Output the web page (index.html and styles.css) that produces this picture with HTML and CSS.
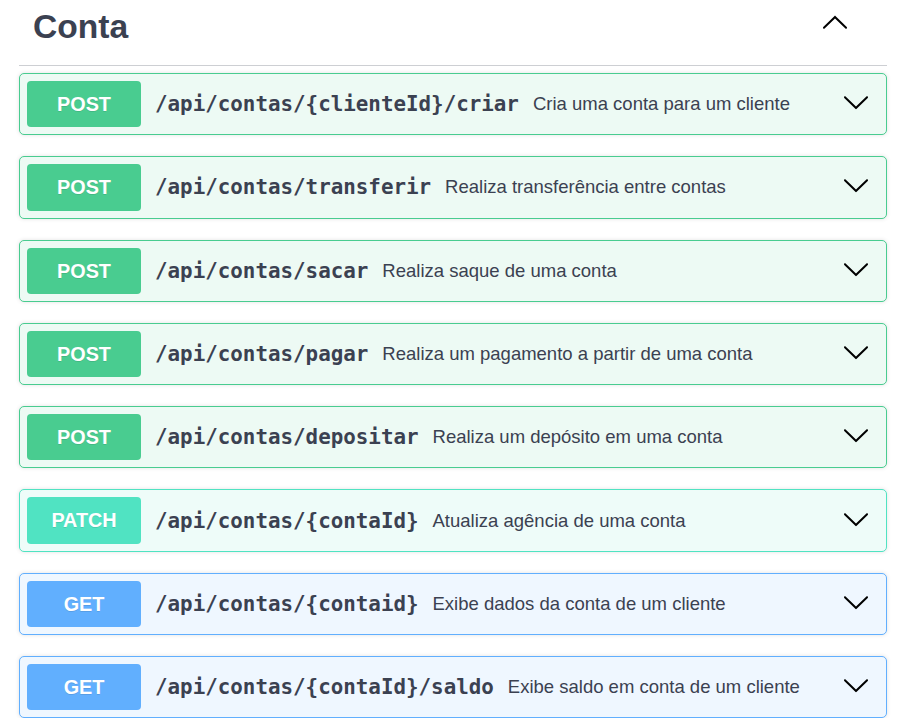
FILE: index.html
```html
<!DOCTYPE html>
<html lang="pt">
<head>
<meta charset="utf-8">
<title>Conta</title>
<link rel="stylesheet" href="styles.css">
</head>
<body>
<div class="tag-section">
  <div class="tag-header">
    <h3 class="tag-title">Conta</h3>
    <svg class="arrow arrow-up" viewBox="0 0 20 20" width="28" height="28"><path transform="rotate(180 10 10)" d="M17.418 6.109c.272-.268.709-.268.979 0s.271.701 0 .969l-7.908 7.83c-.27.268-.707.268-.979 0l-7.908-7.83c-.27-.268-.27-.701 0-.969.271-.268.709-.268.979 0L10 13.25l7.418-7.141z"/></svg>
  </div>
  <div class="ops">
    <div class="op op-post">
      <span class="method">POST</span>
      <span class="path">/api/contas/{clienteId}/criar</span>
      <span class="desc">Cria uma conta para um cliente</span>
      <svg class="arrow" viewBox="0 0 20 20" width="28" height="28"><path d="M17.418 6.109c.272-.268.709-.268.979 0s.271.701 0 .969l-7.908 7.83c-.27.268-.707.268-.979 0l-7.908-7.83c-.27-.268-.27-.701 0-.969.271-.268.709-.268.979 0L10 13.25l7.418-7.141z"/></svg>
    </div>
    <div class="op op-post">
      <span class="method">POST</span>
      <span class="path">/api/contas/transferir</span>
      <span class="desc">Realiza transferência entre contas</span>
      <svg class="arrow" viewBox="0 0 20 20" width="28" height="28"><path d="M17.418 6.109c.272-.268.709-.268.979 0s.271.701 0 .969l-7.908 7.83c-.27.268-.707.268-.979 0l-7.908-7.83c-.27-.268-.27-.701 0-.969.271-.268.709-.268.979 0L10 13.25l7.418-7.141z"/></svg>
    </div>
    <div class="op op-post">
      <span class="method">POST</span>
      <span class="path">/api/contas/sacar</span>
      <span class="desc">Realiza saque de uma conta</span>
      <svg class="arrow" viewBox="0 0 20 20" width="28" height="28"><path d="M17.418 6.109c.272-.268.709-.268.979 0s.271.701 0 .969l-7.908 7.83c-.27.268-.707.268-.979 0l-7.908-7.83c-.27-.268-.27-.701 0-.969.271-.268.709-.268.979 0L10 13.25l7.418-7.141z"/></svg>
    </div>
    <div class="op op-post">
      <span class="method">POST</span>
      <span class="path">/api/contas/pagar</span>
      <span class="desc">Realiza um pagamento a partir de uma conta</span>
      <svg class="arrow" viewBox="0 0 20 20" width="28" height="28"><path d="M17.418 6.109c.272-.268.709-.268.979 0s.271.701 0 .969l-7.908 7.83c-.27.268-.707.268-.979 0l-7.908-7.83c-.27-.268-.27-.701 0-.969.271-.268.709-.268.979 0L10 13.25l7.418-7.141z"/></svg>
    </div>
    <div class="op op-post">
      <span class="method">POST</span>
      <span class="path">/api/contas/depositar</span>
      <span class="desc">Realiza um depósito em uma conta</span>
      <svg class="arrow" viewBox="0 0 20 20" width="28" height="28"><path d="M17.418 6.109c.272-.268.709-.268.979 0s.271.701 0 .969l-7.908 7.83c-.27.268-.707.268-.979 0l-7.908-7.83c-.27-.268-.27-.701 0-.969.271-.268.709-.268.979 0L10 13.25l7.418-7.141z"/></svg>
    </div>
    <div class="op op-patch">
      <span class="method">PATCH</span>
      <span class="path">/api/contas/{contaId}</span>
      <span class="desc">Atualiza agência de uma conta</span>
      <svg class="arrow" viewBox="0 0 20 20" width="28" height="28"><path d="M17.418 6.109c.272-.268.709-.268.979 0s.271.701 0 .969l-7.908 7.83c-.27.268-.707.268-.979 0l-7.908-7.83c-.27-.268-.27-.701 0-.969.271-.268.709-.268.979 0L10 13.25l7.418-7.141z"/></svg>
    </div>
    <div class="op op-get">
      <span class="method">GET</span>
      <span class="path">/api/contas/{contaid}</span>
      <span class="desc">Exibe dados da conta de um cliente</span>
      <svg class="arrow" viewBox="0 0 20 20" width="28" height="28"><path d="M17.418 6.109c.272-.268.709-.268.979 0s.271.701 0 .969l-7.908 7.83c-.27.268-.707.268-.979 0l-7.908-7.83c-.27-.268-.27-.701 0-.969.271-.268.709-.268.979 0L10 13.25l7.418-7.141z"/></svg>
    </div>
    <div class="op op-get">
      <span class="method">GET</span>
      <span class="path">/api/contas/{contaId}/saldo</span>
      <span class="desc">Exibe saldo em conta de um cliente</span>
      <svg class="arrow" viewBox="0 0 20 20" width="28" height="28"><path d="M17.418 6.109c.272-.268.709-.268.979 0s.271.701 0 .969l-7.908 7.83c-.27.268-.707.268-.979 0l-7.908-7.83c-.27-.268-.27-.701 0-.969.271-.268.709-.268.979 0L10 13.25l7.418-7.141z"/></svg>
    </div>
  </div>
</div>
</body>
</html>
```

FILE: styles.css
```css
html, body {
  margin: 0;
  padding: 0;
  background: #ffffff;
}

body {
  font-family: "Liberation Sans", Arial, sans-serif;
  color: #3b4151;
}

.tag-section {
  margin: 0 25px 0 19px;
}

.tag-header {
  display: flex;
  align-items: flex-start;
  justify-content: space-between;
  height: 66px;
  box-sizing: border-box;
  padding: 7px 38px 0 14px;
  border-bottom: 1px solid #cdcfd3;
  margin-bottom: 7px;
}

.tag-title {
  margin: 0;
  font-size: 33.6px;
  line-height: 40px;
  font-weight: bold;
  color: #3b4151;
}

.arrow {
  flex: none;
  fill: #000000;
}

.arrow-up {
  margin-top: 2px;
}

.ops {
  display: flex;
  flex-direction: column;
  gap: 21px;
}

.op {
  display: flex;
  align-items: center;
  padding: 7px;
  border: 1px solid;
  border-radius: 5px;
  box-shadow: 0 0 4px rgba(0, 0, 0, 0.12);
}

.op-post {
  border-color: #49cc90;
  background: #edfaf4;
}

.op-patch {
  border-color: #50e3c2;
  background: #eefcf9;
}

.op-get {
  border-color: #61affe;
  background: #eff7ff;
}

.method {
  flex: none;
  width: 114px;
  height: 46.3px;
  line-height: 46.3px;
  text-align: center;
  border-radius: 4px;
  color: #ffffff;
  font-size: 19.8px;
  font-weight: bold;
  text-shadow: 0 1px 0 rgba(0, 0, 0, 0.1);
}

.op-post .method { background: #49cc90; }
.op-patch .method { background: #50e3c2; }
.op-get .method { background: #61affe; }

.path {
  flex: none;
  padding: 0 14px;
  font-family: "DejaVu Sans Mono", monospace;
  font-weight: bold;
  font-size: 20.85px;
  color: #3b4151;
}

.desc {
  flex: 1;
  font-size: 18.5px;
  color: #3b4151;
}

.op .arrow {
  margin: 0 9px 4px 0;
}
```
